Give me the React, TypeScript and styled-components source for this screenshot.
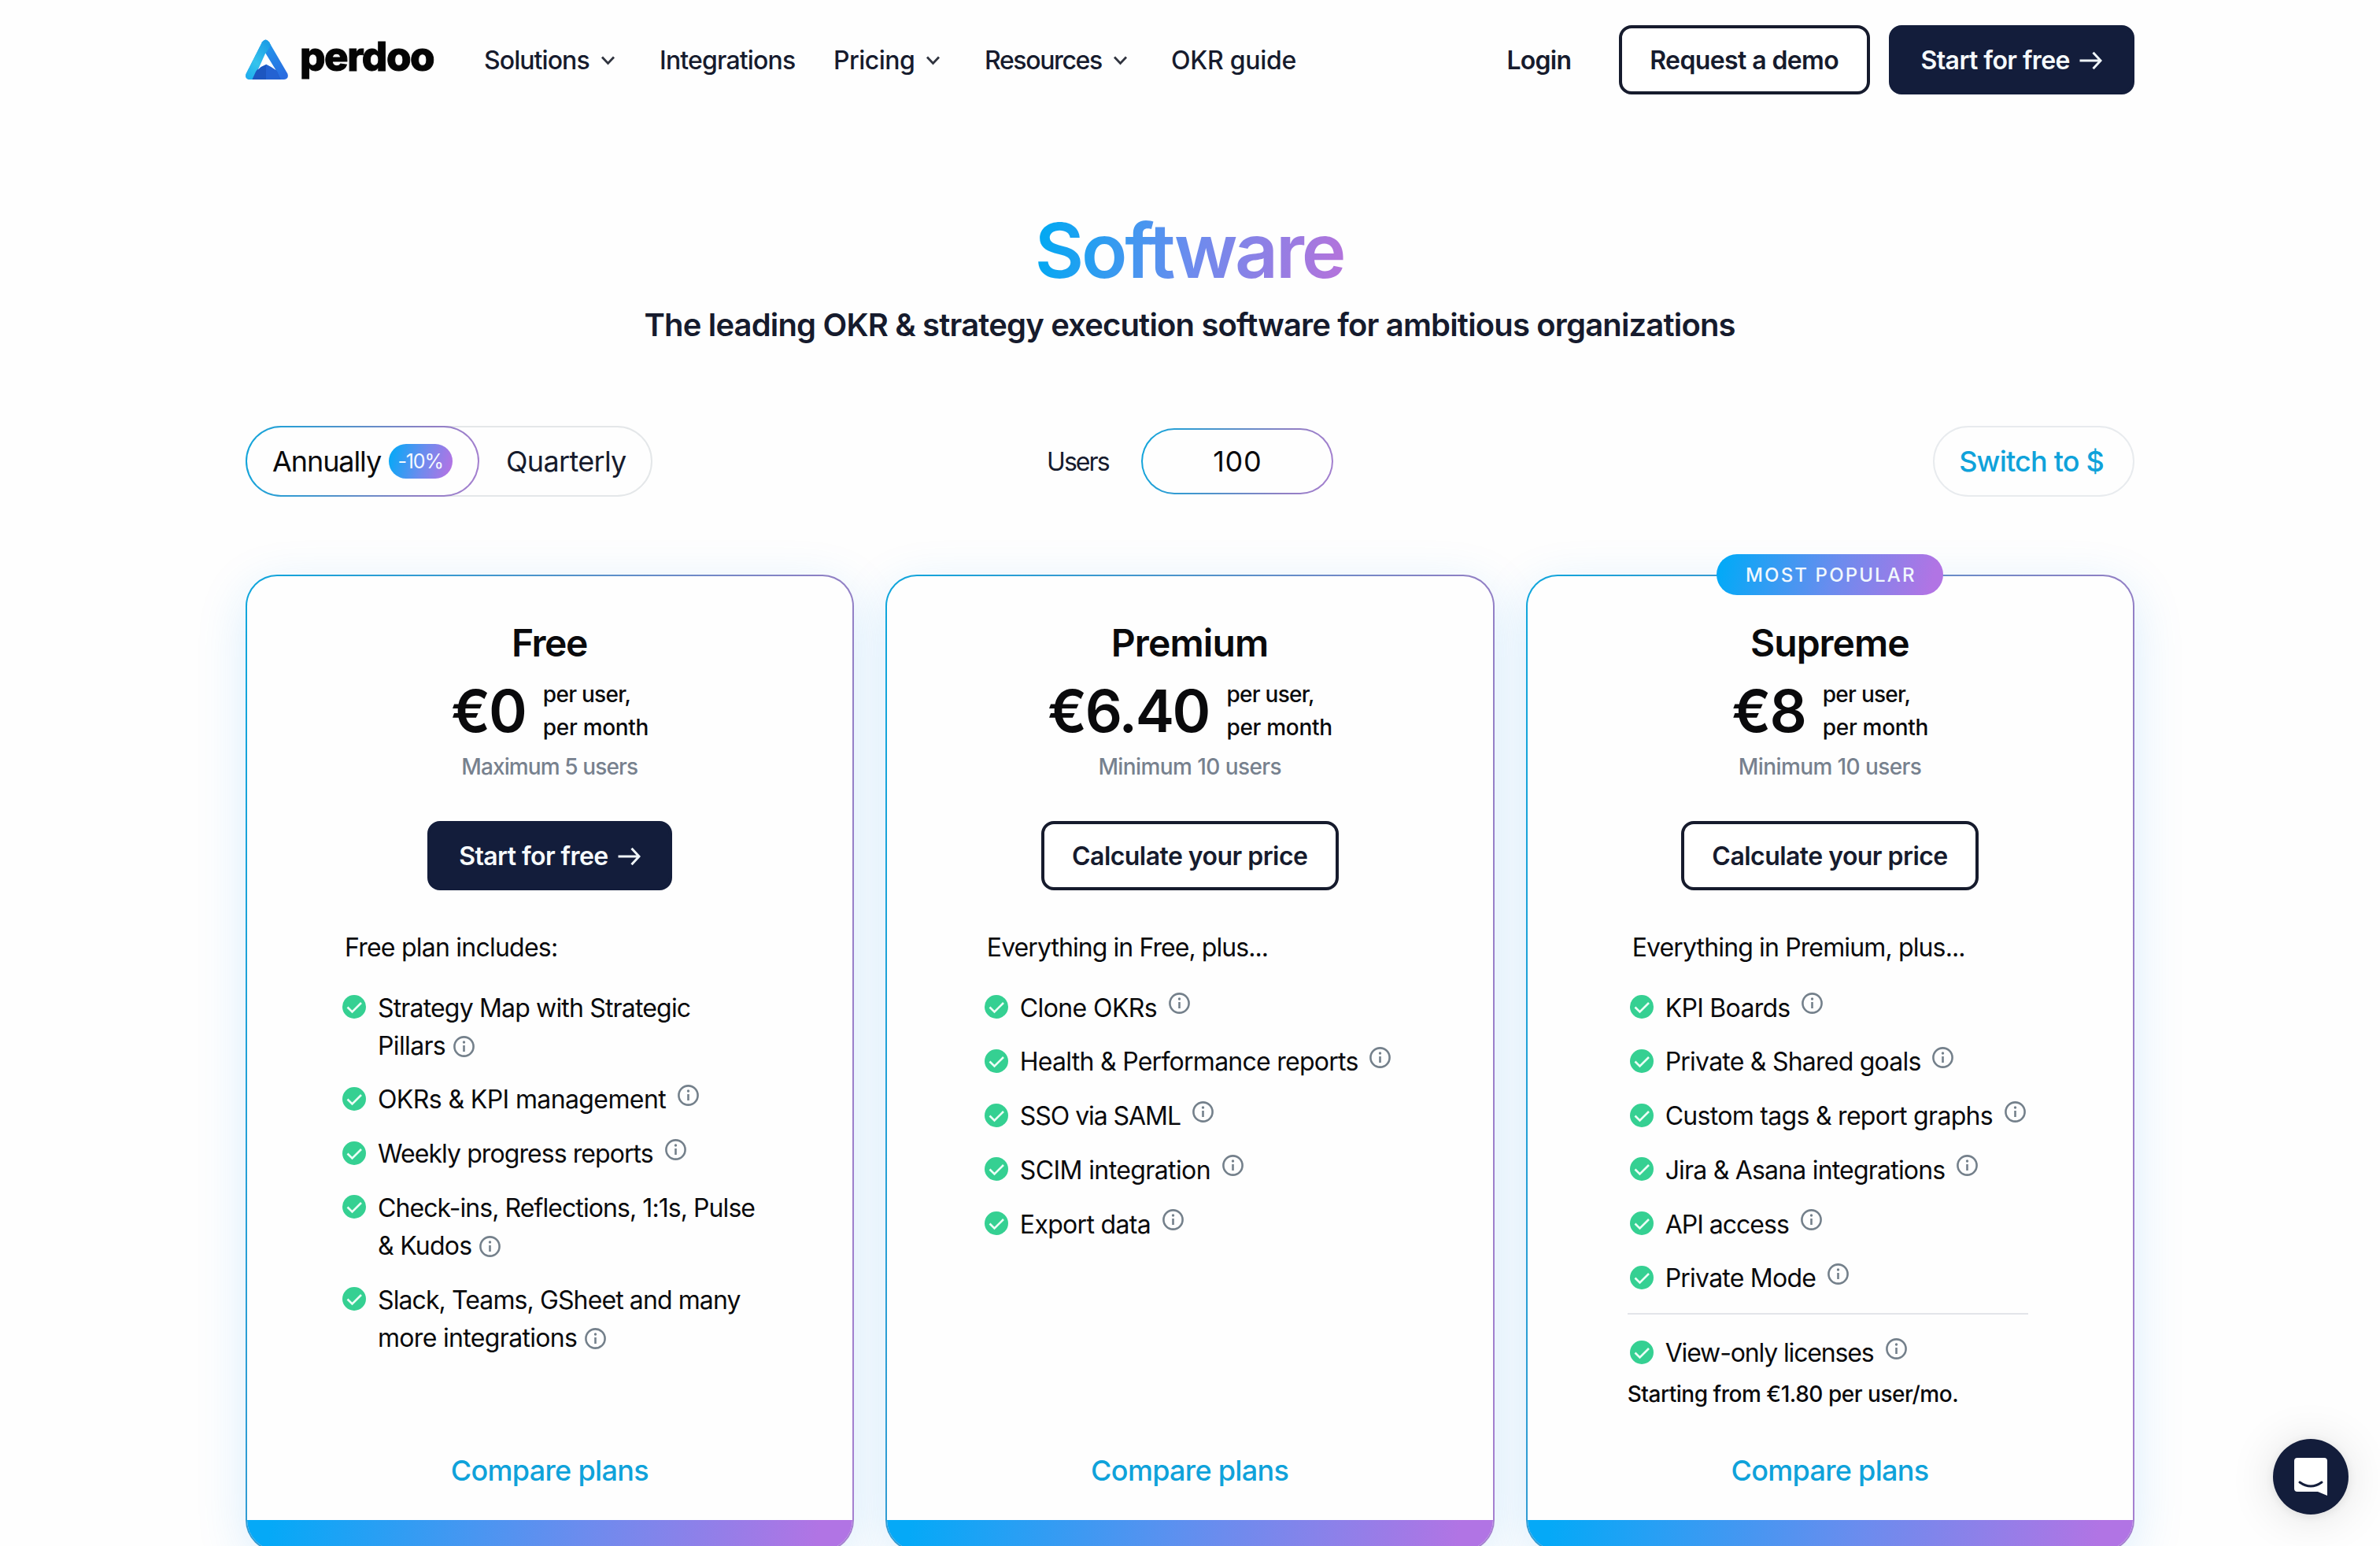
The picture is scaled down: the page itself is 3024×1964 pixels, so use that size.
import React from 'react';
import styled, { createGlobalStyle } from 'styled-components';

const ink = '#161b2d';
const navy = '#131d3b';
const blue = '#0fa2da';
const brand = 'linear-gradient(105deg, #05a9f7 4%, #6b8cee 52%, #b174e4 94%)';
const edge = 'linear-gradient(100deg, #0ea6dc 0%, #4f93cb 40%, #8f80c4 75%, #a57fd0 100%)';

const Global = createGlobalStyle`
  *, *::before, *::after { box-sizing: border-box; }
  body { margin: 0; background: #fefefe; font-family: Inter, "Liberation Sans", sans-serif; overflow: hidden; }
`;

const Page = styled.div`
  position: relative;
  width: 3024px;
  height: 1964px;
  overflow: hidden;
  background: #fefefe;
  color: #0a0a0c;
`;

const Content = styled.div`
  width: 2400px;
  margin: 0 auto;
`;

/* Text with a tracking value given in thousandths of an em. */
const Tx = styled.span<{ $t?: number }>`
  letter-spacing: ${p => (p.$t ?? -23) / 1000}em;
  margin-right: ${p => -(p.$t ?? -23) / 1000}em;
  white-space: nowrap;
`;

const Header = styled.header`
  display: flex;
  align-items: center;
  height: 152px;
`;

const Brand = styled.a`
  display: flex;
  align-items: center;
  width: 240px;
  height: 52px;
  gap: 13px;
  margin-right: 63px;

  svg { flex: none; }
`;

const Wordmark = styled(Tx)`
  font-size: 51px;
  font-weight: 800;
  line-height: 50px;
  margin-top: -8px;
  color: #050505;
  -webkit-text-stroke: 1px #050505;
`;

const Nav = styled.nav`
  display: flex;
  align-items: center;
  flex: 1;
  font-size: 32px;
  font-weight: 500;
  line-height: 48px;
  color: ${ink};
`;

const NavItem = styled.a<{ $w: number }>`
  display: flex;
  align-items: center;
  gap: 13px;
  width: ${p => p.$w}px;
  padding-top: 2px;
`;

const Actions = styled.div`
  display: flex;
  align-items: center;
  gap: 24px;
`;

const Login = styled.a`
  font-size: 32px;
  font-weight: 600;
  line-height: 48px;
  color: ${ink};
  margin-right: 36px;
  padding-top: 2px;
`;

const Button = styled.button<{ $w: number; $solid?: boolean }>`
  display: flex;
  align-items: center;
  justify-content: center;
  gap: 12px;
  width: ${p => p.$w}px;
  height: 88px;
  padding: 2px 0 0;
  border: 4px solid ${p => (p.$solid ? navy : ink)};
  border-radius: 16px;
  background: ${p => (p.$solid ? navy : '#fff')};
  color: ${p => (p.$solid ? '#f6fafc' : ink)};
  font: 600 32px/48px Inter, "Liberation Sans", sans-serif;
`;

const Hero = styled.section`
  display: flex;
  flex-direction: column;
  align-items: center;
  padding-top: 111px;
`;

const Title = styled.h1`
  margin: 0;
  font-size: 96px;
  font-weight: 600;
  line-height: 110px;
  letter-spacing: -0.034em;
  padding-right: 2px;
  color: transparent;
  background: linear-gradient(100deg, #04a8f2 4%, #6b8cee 50%, #b174dc 96%);
  background-clip: text;
  -webkit-background-clip: text;
`;

const Subtitle = styled.p`
  margin: 10px 0 0;
  font-size: 40px;
  font-weight: 600;
  line-height: 60px;
  color: ${ink};
`;

const Controls = styled.section`
  display: grid;
  grid-template-columns: 1fr auto 1fr;
  align-items: center;
  margin-top: 98px;
  height: 90px;
`;

const Toggle = styled.div`
  display: flex;
  align-items: center;
  width: 517px;
  height: 90px;
  border: 2px solid #e4e7e9;
  border-radius: 45px;
  font-size: 36px;
  line-height: 54px;
`;

const ActivePeriod = styled.div`
  display: flex;
  align-items: center;
  width: 297px;
  height: 90px;
  margin: -2px 0 -2px -2px;
  padding-left: 32px;
  gap: 9px;
  border: 2px solid transparent;
  border-radius: 45px;
  background: linear-gradient(#fefefe, #fefefe) padding-box, ${edge} border-box;
`;

const Period = styled.div`
  padding-left: 34px;
  color: ${ink};
`;

const Discount = styled.div`
  display: flex;
  align-items: center;
  justify-content: center;
  width: 81px;
  height: 44px;
  border-radius: 22px;
  background: ${brand};
  color: #f5faff;
  font-size: 25px;
  line-height: 44px;
`;

const Users = styled.div`
  display: flex;
  align-items: center;
  justify-content: space-between;
  width: 364px;
  font-size: 32px;
  color: ${ink};
`;

const UserCount = styled.div`
  display: flex;
  align-items: center;
  justify-content: center;
  width: 244px;
  height: 84px;
  border: 2px solid transparent;
  border-radius: 42px;
  background: linear-gradient(#fefefe, #fefefe) padding-box, ${edge} border-box;
  font-size: 36px;
  color: #0a0a0c;
`;

const Currency = styled.div`
  justify-self: end;
  display: flex;
  align-items: center;
  justify-content: center;
  width: 256px;
  height: 90px;
  padding-right: 5px;
  border: 2px solid #e8ebee;
  border-radius: 45px;
  font-size: 36px;
  font-weight: 500;
  color: ${blue};
`;

const Plans = styled.section`
  display: grid;
  grid-template-columns: repeat(3, 1fr);
  gap: 40px;
  margin-top: 99px;
  isolation: isolate;
`;

const Card = styled.article`
  position: relative;
  display: flex;
  flex-direction: column;
  align-items: center;
  height: 1241px;
  padding-top: 55px;
  border: 2px solid transparent;
  border-radius: 40px;
  background: linear-gradient(#fefefe, #fefefe) padding-box, ${edge} border-box;

  &::before {
    content: '';
    position: absolute;
    inset: 0;
    z-index: -1;
    border-radius: 40px;
    box-shadow: 0 16px 64px rgba(30, 150, 245, 0.17);
  }
`;

const Ribbon = styled.div`
  position: absolute;
  top: -28px;
  left: 50%;
  transform: translateX(-50%);
  display: flex;
  align-items: center;
  justify-content: center;
  width: 288px;
  height: 52px;
  border-radius: 26px;
  background: ${brand};
  color: #f1f8fd;
  font-size: 24px;
  font-weight: 500;
`;

const PlanName = styled.h2`
  margin: 0;
  font-size: 48px;
  font-weight: 600;
  line-height: 60px;
`;

const PriceRow = styled.div`
  display: flex;
  align-items: center;
  gap: 20px;
  height: 84px;
  margin-top: 14px;
`;

const Price = styled.div`
  font-size: 74px;
  font-weight: 600;
  line-height: 84px;
`;

const Per = styled.div`
  display: flex;
  flex-direction: column;
  align-items: flex-start;
  font-size: 28px;
  font-weight: 500;
  line-height: 42px;
`;

const Limit = styled.div`
  margin: 8px 0 48px;
  font-size: 28px;
  font-weight: 500;
  line-height: 42px;
  color: #77818e;
`;

const Body = styled.div<{ $indent: number }>`
  align-self: flex-start;
  width: 508px;
  margin-left: ${p => p.$indent}px;
  font-size: 32px;
  line-height: 48px;
`;

const Intro = styled.div`
  padding-left: 5px;
  margin: 49px 0 27px;
`;

const Feature = styled.div`
  display: flex;
  align-items: flex-start;
  gap: 15px;
  padding-left: 2px;
  margin-bottom: 20.8px;
`;

const CheckIcon = styled.svg`
  flex: none;
  width: 30px;
  height: 30px;
  margin-top: 9px;
`;

const Line = styled.div`
  display: flex;
  align-items: center;
  height: 48px;
`;

const LineText = styled(Tx)`
  padding-top: 3px;
`;

const InfoIcon = styled.svg<{ $raised: boolean }>`
  flex: none;
  width: 27px;
  height: 27px;
  margin-left: ${p => (p.$raised ? 14 : 9)}px;
  margin-bottom: ${p => (p.$raised ? 9 : -4)}px;
`;

const Divider = styled.hr`
  height: 2px;
  margin: 0 0 24px -1px;
  border: 0;
  background: #e3e5e9;
`;

const Addon = styled.div`
  margin: -16px 0 0 -1px;
  font-size: 28px;
  font-weight: 500;
  line-height: 48px;
`;

const Compare = styled.a`
  margin-top: auto;
  margin-bottom: 36px;
  font-size: 36px;
  font-weight: 500;
  line-height: 54px;
  color: ${blue};
`;

const Foot = styled.div`
  align-self: stretch;
  flex: none;
  height: 38px;
  border-radius: 0 0 38px 38px;
  background: linear-gradient(100deg, #05a9f7 4%, #6b8cee 55%, #b174e4 94%);
`;

const Chat = styled.button`
  position: absolute;
  right: 40px;
  bottom: 40px;
  display: flex;
  align-items: center;
  justify-content: center;
  width: 96px;
  height: 96px;
  padding: 0;
  border: 0;
  border-radius: 50%;
  background: ${navy};
  box-shadow: 0 2px 12px rgba(0, 0, 0, 0.08), 0 4px 60px rgba(0, 0, 0, 0.12);
`;

const Logo = () => (
  <svg width="56" height="52" viewBox="0 0 56 52">
    <defs>
      <linearGradient id="lg-left" x1="0" y1="1" x2="0.6" y2="0">
        <stop offset="0" stopColor="#19a9ee" />
        <stop offset="0.5" stopColor="#35c3ec" />
        <stop offset="1" stopColor="#1c9fe6" />
      </linearGradient>
      <linearGradient id="lg-right" x1="0" y1="0" x2="0.7" y2="1">
        <stop offset="0" stopColor="#1ba6f0" />
        <stop offset="1" stopColor="#2b6de0" />
      </linearGradient>
      <clipPath id="lg-clip">
        <path d="M21.2 3.2Q25.5 -2 29.8 3.2L53.3 43.5Q55.5 50 49 51H5Q-1.5 50 0.8 43.5Z" />
      </clipPath>
    </defs>
    <g clipPath="url(#lg-clip)">
      <rect width="56" height="52" fill="url(#lg-right)" />
      <path d="M-2 52V-2H28L33 6L25.5 18L9 52Z" fill="url(#lg-left)" />
      <path d="M8 52L13 41Q16 36 26 32Q36 36 40 41L45 52Z" fill="#1d56c0" />
      <path d="M26 32Q36 36 40 41L45 52H26Z" fill="#2462d2" />
    </g>
    <path d="M25.3 17.5L38.5 39Q33 35 26.3 31.8Q20 34 15.8 38.5Z" fill="#fff" />
  </svg>
);

const Chevron = () => (
  <svg width="19" height="14" viewBox="0 0 19 14">
    <path d="M2 2.5L9.5 10.5L17 2.5" fill="none" stroke="#30343f" strokeWidth="2.8" />
  </svg>
);

const Arrow = () => (
  <svg width="29" height="24" viewBox="0 0 29 24">
    <path d="M0.5 12H27M17.5 1.8L27 12L17.5 22.2" fill="none" stroke="#f0f6f9" strokeWidth="3" />
  </svg>
);

const Check = () => (
  <CheckIcon viewBox="0 0 30 30">
    <circle cx="15" cy="15" r="15" fill="#35d092" />
    <path d="M6.5 15.5L12.5 21.5L24 10" fill="none" stroke="#ecfff6" strokeWidth="2.6" />
  </CheckIcon>
);

const Info = ({ raised }: { raised: boolean }) => (
  <InfoIcon $raised={raised} viewBox="0 0 27 27">
    <circle cx="13.5" cy="13.5" r="12.1" fill="none" stroke="#74808b" strokeWidth="2.6" />
    <path d="M13.5 12V20" stroke="#74808b" strokeWidth="2.6" />
    <circle cx="13.5" cy="8" r="1.7" fill="#74808b" />
  </InfoIcon>
);

type Run = [string, number];

const FeatureRow = ({ lines }: { lines: Run[] }) => (
  <Feature>
    <Check />
    <div>
      {lines.map(([text, t], i) => (
        <Line key={text}>
          <LineText $t={t}>{text}</LineText>
          {i === lines.length - 1 && <Info raised={lines.length === 1} />}
        </Line>
      ))}
    </div>
  </Feature>
);

interface Plan {
  name: Run;
  price: Run;
  limit: Run;
  free?: boolean;
  popular?: boolean;
  indent: number;
  intro: Run;
  features: Run[][];
  addon?: boolean;
}

const plans: Plan[] = [
  {
    name: ['Free', -31], price: ['€0', -28], limit: ['Maximum 5 users', -32], free: true, indent: 119,
    intro: ['Free plan includes:', -24],
    features: [
      [['Strategy Map with Strategic', -26], ['Pillars', -20]],
      [['OKRs & KPI management', -19]],
      [['Weekly progress reports', -29]],
      [['Check-ins, Reflections, 1:1s, Pulse', -29], ['& Kudos', -23]],
      [['Slack, Teams, GSheet and many', -28], ['more integrations', -21]],
    ],
  },
  {
    name: ['Premium', -18], price: ['€6.40', -32], limit: ['Minimum 10 users', -21], indent: 121.5,
    intro: ['Everything in Free, plus...', -29],
    features: [
      [['Clone OKRs', -19]],
      [['Health & Performance reports', -23]],
      [['SSO via SAML', -33]],
      [['SCIM integration', -19]],
      [['Export data', -21]],
    ],
  },
  {
    name: ['Supreme', -21], price: ['€8', -28], limit: ['Minimum 10 users', -21], popular: true, indent: 128,
    intro: ['Everything in Premium, plus...', -27],
    features: [
      [['KPI Boards', -22]],
      [['Private & Shared goals', -24]],
      [['Custom tags & report graphs', -22]],
      [['Jira & Asana integrations', -25]],
      [['API access', -31]],
      [['Private Mode', -24]],
    ],
    addon: true,
  },
];

const PlanCard = ({ plan }: { plan: Plan }) => (
  <Card>
    {plan.popular && <Ribbon><Tx $t={89}>MOST POPULAR</Tx></Ribbon>}
    <PlanName><Tx $t={plan.name[1]}>{plan.name[0]}</Tx></PlanName>
    <PriceRow>
      <Price><Tx $t={plan.price[1]}>{plan.price[0]}</Tx></Price>
      <Per>
        <Tx $t={-26}>per user,</Tx>
        <Tx $t={-11}>per month</Tx>
      </Per>
    </PriceRow>
    <Limit><Tx $t={plan.limit[1]}>{plan.limit[0]}</Tx></Limit>
    {plan.free ? (
      <Button $w={311} $solid><Tx $t={-18}>Start for free</Tx><Arrow /></Button>
    ) : (
      <Button $w={378}><Tx $t={-17}>Calculate your price</Tx></Button>
    )}
    <Body $indent={plan.indent}>
      <Intro><Tx $t={plan.intro[1]}>{plan.intro[0]}</Tx></Intro>
      {plan.features.map(lines => <FeatureRow key={lines[0][0]} lines={lines} />)}
      {plan.addon && (
        <>
          <Divider />
          <FeatureRow lines={[['View-only licenses', -36]]} />
          <Addon><Tx $t={-17}>Starting from €1.80 per user/mo.</Tx></Addon>
        </>
      )}
    </Body>
    <Compare><Tx $t={-19}>Compare plans</Tx></Compare>
    <Foot />
  </Card>
);

export default function App() {
  return (
    <Page>
      <Global />
      <Content>
        <Header>
          <Brand><Logo /><Wordmark $t={-28}>perdoo</Wordmark></Brand>
          <Nav>
            <NavItem $w={223}><Tx $t={-29}>Solutions</Tx><Chevron /></NavItem>
            <NavItem $w={221}><Tx $t={-26}>Integrations</Tx></NavItem>
            <NavItem $w={192}><Tx $t={-16}>Pricing</Tx><Chevron /></NavItem>
            <NavItem $w={237}><Tx $t={-43}>Resources</Tx><Chevron /></NavItem>
            <NavItem $w={170}><Tx $t={-9}>OKR guide</Tx></NavItem>
          </Nav>
          <Actions>
            <Login><Tx $t={-23}>Login</Tx></Login>
            <Button $w={319}><Tx $t={-19}>Request a demo</Tx></Button>
            <Button $w={312} $solid><Tx $t={-18}>Start for free</Tx><Arrow /></Button>
          </Actions>
        </Header>
        <Hero>
          <Title>Software</Title>
          <Subtitle><Tx $t={-21}>The leading OKR &amp; strategy execution software for ambitious organizations</Tx></Subtitle>
        </Hero>
        <Controls>
          <Toggle>
            <ActivePeriod>
              <Tx $t={-30}>Annually</Tx>
              <Discount><Tx $t={-46}>-10%</Tx></Discount>
            </ActivePeriod>
            <Period><Tx $t={-19}>Quarterly</Tx></Period>
          </Toggle>
          <Users>
            <Tx $t={-60}>Users</Tx>
            <UserCount><Tx $t={20}>100</Tx></UserCount>
          </Users>
          <Currency><Tx $t={-22}>Switch to $</Tx></Currency>
        </Controls>
        <Plans>
          {plans.map(plan => <PlanCard key={plan.name[0]} plan={plan} />)}
        </Plans>
      </Content>
      <Chat>
        <svg width="44" height="50" viewBox="0 0 44 50">
          <path d="M5 1H39Q43 1 43 5V49L31 44H5Q1 44 1 40V5Q1 1 5 1Z" fill="#fff" />
          <path d="M8 32Q22 42 36 32" fill="none" stroke={navy} strokeWidth="3" strokeLinecap="round" />
        </svg>
      </Chat>
    </Page>
  );
}
